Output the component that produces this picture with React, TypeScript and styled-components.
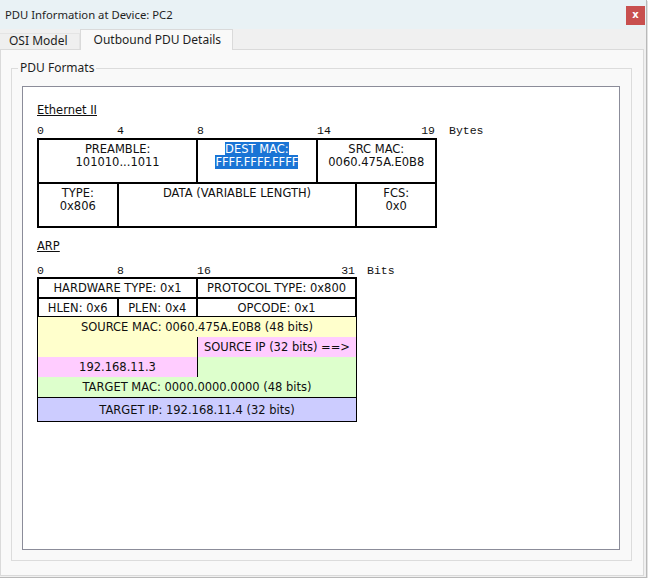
import React from "react";
import styled, { createGlobalStyle } from "styled-components";

const Global = createGlobalStyle`
  html, body { margin: 0; padding: 0; background: #ffffff; }
  body { font-family: "Noto Sans", "DejaVu Sans", sans-serif; color: #1e1e1e; }
  * { box-sizing: border-box; }
`;

const Window = styled.div`
  width: 647px;
  height: 578px;
  background: #f0f0f0;
  border-right: 1px solid #b9b9b9;
  border-bottom: 1px solid #b9b9b9;
  box-shadow: 1px 1px 0 #e2e2e2;
  display: flex;
  flex-direction: column;
`;

const TitleBar = styled.div`
  height: 29px;
  flex: none;
  background: #e9f2f5;
  display: flex;
  align-items: flex-start;
  justify-content: space-between;
  padding: 0 1px 0 5px;
`;

const TitleText = styled.div`
  font-size: 11.3px;
  line-height: 29px;
  color: #1f1f1f;
`;

const CloseButton = styled.div`
  width: 19px;
  height: 19px;
  margin-top: 6px;
  background: #c8504f;
  color: #ffffff;
  font-family: "DejaVu Sans", sans-serif;
  font-weight: bold;
  font-size: 10px;
  line-height: 18px;
  text-align: center;
`;

const TabBar = styled.div`
  height: 20px;
  flex: none;
  display: flex;
  align-items: flex-end;
`;

const Tab = styled.div<{ $active?: boolean }>`
  position: relative;
  z-index: ${(p) => (p.$active ? 1 : 0)};
  height: ${(p) => (p.$active ? "21px" : "16px")};
  margin-bottom: ${(p) => (p.$active ? "-1px" : "0")};
  padding: ${(p) => (p.$active ? "0 11px 0 13px" : "0 11px 0 9px")};
  background: ${(p) => (p.$active ? "#f9f9f9" : "#efefef")};
  border: 1px solid ${(p) => (p.$active ? "#dadada" : "#e4e4e4")};
  border-bottom: none;
  border-left: ${(p) => (p.$active ? "1px solid #dadada" : "none")};
  font-size: 12px;
  line-height: ${(p) => (p.$active ? "19px" : "14px")};
  color: #1e1e1e;
  white-space: nowrap;
`;

const Panel = styled.div`
  flex: 1;
  margin: 0 2px 1px 0;
  background: #f9f9f9;
  border: 1px solid #dadada;
  padding: 11px 11px 14px 10px;
  display: flex;
  flex-direction: column;
`;

const Group = styled.fieldset`
  flex: 1;
  margin: 0;
  min-width: 0;
  border: 1px solid #dcdcdc;
  padding: 11px 11px 10px 10px;
  display: flex;
  flex-direction: column;
`;

const GroupLegend = styled.legend`
  font-size: 12px;
  line-height: 14px;
  padding: 0 2px;
  margin-left: -4px;
  color: #1e1e1e;
`;

const Sheet = styled.div`
  flex: 1;
  background: #ffffff;
  border: 1px solid #8b8c99;
  padding: 17px 14px;
  font-family: "DejaVu Sans", sans-serif;
  font-size: 11.5px;
  color: #101010;
`;

const SectionTitle = styled.div<{ $gap: number }>`
  margin-top: ${(p) => p.$gap}px;
  line-height: 13.5px;
  text-decoration: underline;
  text-underline-offset: 1px;
`;

const ScaleRow = styled.div<{ $gap: number; $after: number }>`
  display: flex;
  align-items: flex-end;
  margin-top: ${(p) => p.$gap}px;
  margin-bottom: ${(p) => p.$after}px;
  font-family: "Liberation Mono", "DejaVu Sans Mono", monospace;
  font-size: 11.5px;
  line-height: 12px;
  color: #111;
`;

const Scale = styled.div<{ $cols: number; $width: number }>`
  width: ${(p) => p.$width}px;
  display: grid;
  grid-template-columns: repeat(${(p) => p.$cols}, 1fr);
`;

const Tick = styled.span<{ $from: number; $to: number; $right?: boolean }>`
  grid-column: ${(p) => p.$from} / ${(p) => p.$to};
  text-align: ${(p) => (p.$right ? "right" : "left")};
  padding-right: ${(p) => (p.$right ? "2px" : "0")};
  white-space: nowrap;
`;

const Unit = styled.span<{ $gap: number }>`
  margin-left: ${(p) => p.$gap}px;
`;

const EthTable = styled.div`
  width: 400px;
  border: 1px solid #000;
  display: grid;
  grid-template-columns: repeat(20, 1fr);
  grid-template-rows: 44px 44px;
`;

const EthCell = styled.div<{ $span: number }>`
  grid-column: span ${(p) => p.$span};
  border: 1px solid #000;
  padding-top: 3px;
  text-align: center;
  line-height: 13.5px;
  white-space: nowrap;
`;

const Selected = styled.span`
  background: #1a74d5;
  color: #ffffff;
`;

const ArpTable = styled.div`
  width: 320px;
  border: 1px solid #000;
  display: grid;
  grid-template-columns: repeat(32, 1fr);
  grid-template-rows: 20px 19px 20px 20px 20px 20px 24px;
`;

const ArpField = styled.div<{ $span: number }>`
  grid-column: span ${(p) => p.$span};
  border: 1px solid #000;
  display: flex;
  align-items: center;
  justify-content: center;
  white-space: nowrap;
`;

const ArpBand = styled.div<{ $span: number; $bg: string; $left?: boolean; $top?: boolean }>`
  grid-column: span ${(p) => p.$span};
  background: ${(p) => p.$bg};
  border-left: ${(p) => (p.$left ? "1px solid #000" : "none")};
  border-top: ${(p) => (p.$top ? "1px solid #000" : "none")};
  display: flex;
  align-items: center;
  justify-content: center;
  white-space: nowrap;
`;

const YELLOW = "#ffffcc";
const PINK = "#ffccff";
const GREEN = "#ddffcc";
const LAVENDER = "#ccccff";

export default function App() {
  return (
    <>
      <Global />
      <Window>
        <TitleBar>
          <TitleText>PDU Information at Device: PC2</TitleText>
          <CloseButton>x</CloseButton>
        </TitleBar>
        <TabBar>
          <Tab>OSI Model</Tab>
          <Tab $active>Outbound PDU Details</Tab>
        </TabBar>
        <Panel>
          <Group>
            <GroupLegend>PDU Formats</GroupLegend>
            <Sheet>
              <SectionTitle $gap={0}>Ethernet II</SectionTitle>
              <ScaleRow $gap={7} $after={1}>
                <Scale $cols={20} $width={400}>
                  <Tick $from={1} $to={5}>0</Tick>
                  <Tick $from={5} $to={9}>4</Tick>
                  <Tick $from={9} $to={15}>8</Tick>
                  <Tick $from={15} $to={18}>14</Tick>
                  <Tick $from={18} $to={21} $right>19</Tick>
                </Scale>
                <Unit $gap={12}>Bytes</Unit>
              </ScaleRow>
              <EthTable>
                <EthCell $span={8}>
                  PREAMBLE:
                  <br />
                  101010...1011
                </EthCell>
                <EthCell $span={6}>
                  <Selected>DEST MAC:</Selected>
                  <br />
                  <Selected>FFFF.FFFF.FFFF</Selected>
                </EthCell>
                <EthCell $span={6}>
                  SRC MAC:
                  <br />
                  0060.475A.E0B8
                </EthCell>
                <EthCell $span={4}>
                  TYPE:
                  <br />
                  0x806
                </EthCell>
                <EthCell $span={12}>DATA (VARIABLE LENGTH)</EthCell>
                <EthCell $span={4}>
                  FCS:
                  <br />
                  0x0
                </EthCell>
              </EthTable>

              <SectionTitle $gap={12}>ARP</SectionTitle>
              <ScaleRow $gap={12} $after={0}>
                <Scale $cols={32} $width={320}>
                  <Tick $from={1} $to={9}>0</Tick>
                  <Tick $from={9} $to={17}>8</Tick>
                  <Tick $from={17} $to={25}>16</Tick>
                  <Tick $from={25} $to={33} $right>31</Tick>
                </Scale>
                <Unit $gap={10}>Bits</Unit>
              </ScaleRow>
              <ArpTable>
                <ArpField $span={16}>HARDWARE TYPE: 0x1</ArpField>
                <ArpField $span={16}>PROTOCOL TYPE: 0x800</ArpField>
                <ArpField $span={8}>HLEN: 0x6</ArpField>
                <ArpField $span={8}>PLEN: 0x4</ArpField>
                <ArpField $span={16}>OPCODE: 0x1</ArpField>
                <ArpBand $span={32} $bg={YELLOW}>SOURCE MAC: 0060.475A.E0B8 (48 bits)</ArpBand>
                <ArpBand $span={16} $bg={YELLOW} />
                <ArpBand $span={16} $bg={PINK} $left>SOURCE IP (32 bits) ==&gt;</ArpBand>
                <ArpBand $span={16} $bg={PINK}>192.168.11.3</ArpBand>
                <ArpBand $span={16} $bg={GREEN} $left />
                <ArpBand $span={32} $bg={GREEN}>TARGET MAC: 0000.0000.0000 (48 bits)</ArpBand>
                <ArpBand $span={32} $bg={LAVENDER} $top>TARGET IP: 192.168.11.4 (32 bits)</ArpBand>
              </ArpTable>
            </Sheet>
          </Group>
        </Panel>
      </Window>
    </>
  );
}
